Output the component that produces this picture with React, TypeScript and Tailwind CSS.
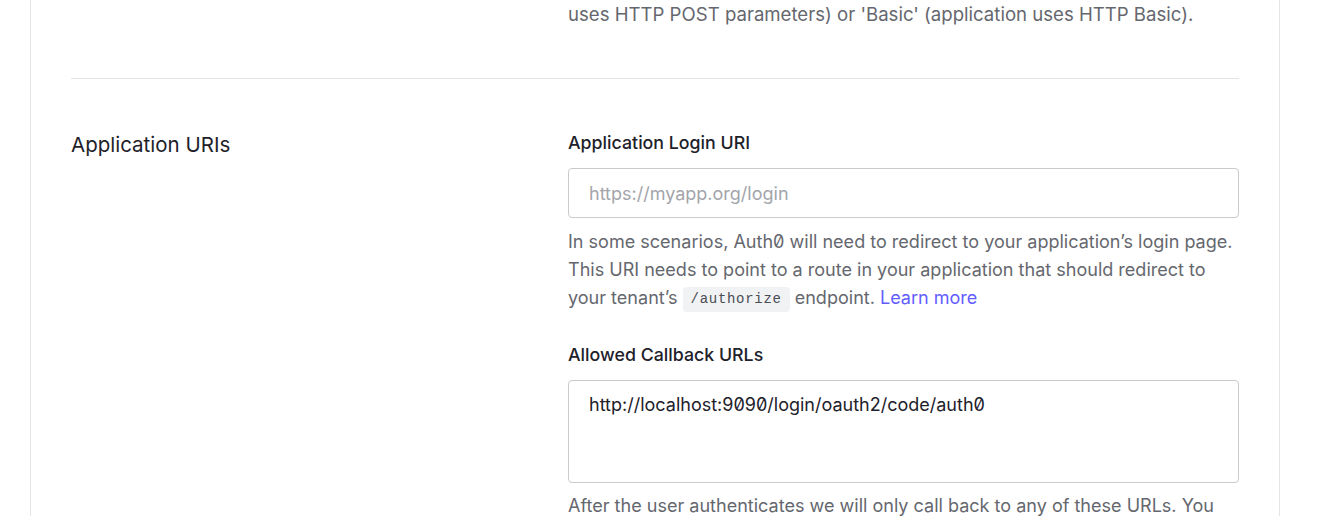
export default function App() {
  return (
    <div className="min-h-screen bg-white pl-[30px] pr-[52px] font-['Inter','Noto_Sans',sans-serif] [font-feature-settings:'zero']">
      <div className="border-x border-[#e3e4e6] px-[40px] h-[516px] overflow-hidden">
        {/* tail of previous section */}
        <div className="flex pb-[50px] border-b border-[#e3e4e6]">
          <div className="w-[497px] shrink-0" />
          <p className="flex-1 text-[18.6px] leading-[28px] text-[#65676e]">
            uses HTTP POST parameters) or 'Basic' (application uses HTTP Basic).
          </p>
        </div>

        <div className="flex pt-[52px]">
          <div className="w-[497px] shrink-0">
            <h3 className="text-[20.5px] leading-[28px] font-normal text-[#1e212a]">Application URIs</h3>
          </div>

          <div className="flex-1 min-w-0">
            <label className="block text-[17.8px] leading-6 font-medium text-[#1e212a] mb-[13px]">
              Application Login URI
            </label>
            <input
              type="text"
              placeholder="https://myapp.org/login"
              className="block w-full h-[50px] rounded-[4px] border border-[#c9cace] px-5 text-[18px] text-[#1e212a] placeholder:text-[#a3a5ab] outline-none"
            />
            <p className="mt-[10px] text-[18.05px] leading-[28px] text-[#65676e] whitespace-nowrap">
              In some scenarios, Auth0 will need to redirect to your application’s login page.
              <br />
              This URI needs to point to a route in your application that should redirect to
              <br />
              your tenant’s{' '}
              <code className="inline-block align-middle leading-[25px] rounded-[4px] bg-[#f1f2f3] px-2 font-['Liberation_Mono',monospace] text-[14px] tracking-[0.05em] text-[#4a4d55]">
                /authorize
              </code>{' '}
              endpoint. <a href="#" className="text-[#635dff]">Learn more</a>
            </p>

            <label className="block mt-[31px] text-[17.8px] leading-6 font-medium text-[#1e212a] mb-[13px]">
              Allowed Callback URLs
            </label>
            <textarea
              defaultValue="http://localhost:9090/login/oauth2/code/auth0"
              className="block w-full h-[103px] resize-none rounded-[4px] border border-[#c9cace] px-5 py-3 text-[18px] leading-6 text-[#1e212a] outline-none"
            />
            <p className="mt-[9px] text-[18.05px] leading-[28px] text-[#65676e]">
              After the user authenticates we will only call back to any of these URLs. You
              <br />
              can specify multiple valid URLs by comma-separating them.
            </p>
          </div>
        </div>
      </div>
    </div>
  );
}
